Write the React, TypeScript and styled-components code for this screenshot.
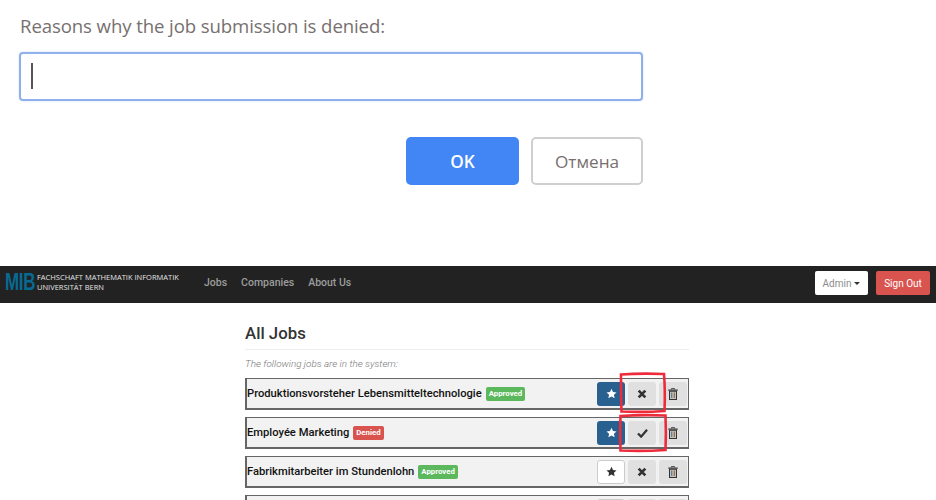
import React from "react";
import styled, { createGlobalStyle } from "styled-components";

const Global = createGlobalStyle`
  html, body {
    margin: 0;
    padding: 0;
    background: #ffffff;
    overflow: hidden;
  }
  * { box-sizing: border-box; }
`;

const Page = styled.div`
  position: relative;
  width: 936px;
  height: 500px;
  overflow: hidden;
  font-family: Roboto, "Liberation Sans", sans-serif;
`;

const Prompt = styled.div`
  height: 266px;
  padding: 15px 293px 0 19px;
  font-family: "Open Sans", "Noto Sans", sans-serif;
`;

const PromptTitle = styled.div`
  margin-left: 1px;
  font-size: 18.6px;
  line-height: 22px;
  color: #77706f;
  letter-spacing: -0.1px;
`;

const PromptInput = styled.div`
  margin-top: 15px;
  height: 49px;
  border: 2px solid #8fb0ea;
  border-radius: 4px;
  box-shadow: 0 0 2px #c5d6f4;
  padding: 9px 10px;
`;

const Caret = styled.div`
  width: 2px;
  height: 26px;
  background: #555555;
`;

const PromptActions = styled.div`
  margin-top: 36px;
  display: flex;
  justify-content: flex-end;
  gap: 12px;
`;

const PromptButton = styled.div<{ $primary?: boolean }>`
  height: 48px;
  width: ${(p) => (p.$primary ? "113px" : "112px")};
  display: flex;
  align-items: center;
  justify-content: center;
  border-radius: 5px;
  font-size: 17.2px;
  font-weight: ${(p) => (p.$primary ? 600 : 400)};
  background: ${(p) => (p.$primary ? "#4285f4" : "#ffffff")};
  color: ${(p) => (p.$primary ? "#ffffff" : "#77706f")};
  border: ${(p) => (p.$primary ? "none" : "2px solid #cfcfcf")};
`;

const Navbar = styled.div`
  height: 37px;
  background: #222222;
  display: flex;
  align-items: flex-start;
  padding: 5px 6px 0 5px;
`;

const Brand = styled.div`
  display: flex;
  align-items: center;
  width: 199px;
  height: 23px;
`;

const BrandMark = styled.div`
  font-family: "Liberation Sans", sans-serif;
  font-weight: 700;
  font-size: 17px;
  line-height: 20px;
  color: #076a92;
  transform: scaleY(1.45);
  transform-origin: center;
  width: 32px;
  letter-spacing: -0.3px;
`;

const BrandText = styled.div`
  font-family: "Open Sans", sans-serif;
  font-size: 7.5px;
  line-height: 9.5px;
  color: #e4e4e4;
  white-space: nowrap;
`;

const NavLinks = styled.div`
  height: 23px;
  display: flex;
  align-items: center;
  gap: 14px;
  font-size: 10.5px;
  font-weight: 500;
  color: #9d9d9d;
`;

const NavRight = styled.div`
  margin-left: auto;
  display: flex;
  gap: 8px;
`;

const NavButton = styled.div<{ $danger?: boolean }>`
  height: 24px;
  display: flex;
  align-items: center;
  justify-content: center;
  gap: 3px;
  border-radius: 2px;
  font-size: 10px;
  width: ${(p) => (p.$danger ? "54px" : "53px")};
  background: ${(p) => (p.$danger ? "#d9534f" : "#ffffff")};
  color: ${(p) => (p.$danger ? "#ffffff" : "#8d8d8d")};
`;

const CaretDown = styled.span`
  width: 0;
  height: 0;
  border-left: 3px solid transparent;
  border-right: 3px solid transparent;
  border-top: 3px solid #333333;
`;

const Content = styled.div`
  width: 444px;
  margin-left: 245px;
  padding-top: 21px;
`;

const Heading = styled.div`
  font-size: 16.8px;
  line-height: 19px;
  font-weight: 500;
  color: #333333;
  padding-bottom: 6px;
  border-bottom: 1px solid #eeeeee;
`;

const Lead = styled.div`
  margin-top: 7px;
  height: 13px;
  font-size: 9.9px;
  line-height: 13px;
  font-style: italic;
  font-weight: 300;
  color: #777777;
`;

const JobList = styled.div`
  margin-top: 8px;
  display: flex;
  flex-direction: column;
  gap: 7px;
`;

const JobRow = styled.div`
  height: 32px;
  background: #f2f2f2;
  border: 1px solid #666666;
  border-bottom-width: 2px;
  border-left-width: 2px;
  display: flex;
  align-items: center;
  padding: 0 1px 0 0;
`;

const JobTitle = styled.div`
  font-size: 11.2px;
  font-weight: 500;
  color: #111111;
  white-space: nowrap;
`;

const Badge = styled.span<{ $kind: "ok" | "no" }>`
  margin-left: 4px;
  height: 14px;
  padding: 0 3px;
  display: inline-flex;
  align-items: center;
  border-radius: 2px;
  font-size: 7.8px;
  font-weight: 700;
  color: #ffffff;
  background: ${(p) => (p.$kind === "ok" ? "#5cb85c" : "#d9534f")};
`;

const Actions = styled.div`
  margin-left: auto;
  display: flex;
  gap: 3px;
`;

const ActionButton = styled.div<{ $variant?: "star" | "plain" | "white" }>`
  height: 24px;
  width: 28px;
  display: flex;
  align-items: center;
  justify-content: center;
  border-radius: 3px;
  background: ${(p) =>
    p.$variant === "star" ? "#286090" : p.$variant === "white" ? "#ffffff" : "#e0e0e0"};
  border: ${(p) => (p.$variant === "white" ? "1px solid #cccccc" : "none")};
  color: ${(p) => (p.$variant === "star" ? "#ffffff" : "#333333")};
`;

const Marks = styled.svg`
  position: absolute;
  left: 0;
  top: 0;
  pointer-events: none;
`;

const Star = () => (
  <svg width="11" height="11" viewBox="0 0 24 24" fill="currentColor">
    <path d="M12 1.5l3.3 7.2 7.7.9-5.7 5.3 1.5 7.7L12 18.7l-6.8 3.9 1.5-7.7L1 9.6l7.7-.9z" />
  </svg>
);

const Cross = () => (
  <svg width="10" height="10" viewBox="0 0 24 24" fill="none" stroke="currentColor" strokeWidth="6.5">
    <path d="M4 4l16 16M20 4L4 20" />
  </svg>
);

const Check = () => (
  <svg width="11" height="10" viewBox="0 0 24 22" fill="none" stroke="currentColor" strokeWidth="5">
    <path d="M2 12l7 7L22 4" />
  </svg>
);

const Trash = () => (
  <svg width="10" height="12" viewBox="0 0 20 24">
    <path d="M7 3V1h6v2" fill="none" stroke="#333" strokeWidth="1.6" />
    <rect x="0.5" y="3" width="19" height="2.4" fill="#333" />
    <rect x="3" y="6.5" width="14" height="16.5" fill="#c7c2b5" stroke="#333" strokeWidth="2" />
    <path d="M7.5 9v11" stroke="#3a6ea5" strokeWidth="2" />
    <path d="M12.5 9v11" stroke="#8a5a3a" strokeWidth="2" />
  </svg>
);

type Job = { title: string; status?: "Approved" | "Denied"; starred: boolean; approved: boolean };

const jobs: Job[] = [
  { title: "Produktionsvorsteher Lebensmitteltechnologie", status: "Approved", starred: true, approved: true },
  { title: "Employée Marketing", status: "Denied", starred: true, approved: false },
  { title: "Fabrikmitarbeiter im Stundenlohn", status: "Approved", starred: false, approved: true },
  { title: "", starred: false, approved: true },
];

export default function App() {
  return (
    <Page>
      <Global />
      <Prompt>
        <PromptTitle>Reasons why the job submission is denied:</PromptTitle>
        <PromptInput>
          <Caret />
        </PromptInput>
        <PromptActions>
          <PromptButton $primary>OK</PromptButton>
          <PromptButton>Отмена</PromptButton>
        </PromptActions>
      </Prompt>
      <Navbar>
        <Brand>
          <BrandMark>MIB</BrandMark>
          <BrandText>
            FACHSCHAFT MATHEMATIK INFORMATIK
            <br />
            UNIVERSITÄT BERN
          </BrandText>
        </Brand>
        <NavLinks>
          <span>Jobs</span>
          <span>Companies</span>
          <span>About Us</span>
        </NavLinks>
        <NavRight>
          <NavButton>
            Admin <CaretDown />
          </NavButton>
          <NavButton $danger>Sign Out</NavButton>
        </NavRight>
      </Navbar>
      <Content>
        <Heading>All Jobs</Heading>
        <Lead>The following jobs are in the system:</Lead>
        <JobList>
          {jobs.map((job, i) => (
            <JobRow key={i}>
              <JobTitle>{job.title}</JobTitle>
              {job.status && <Badge $kind={job.status === "Approved" ? "ok" : "no"}>{job.status}</Badge>}
              <Actions>
                <ActionButton $variant={job.starred ? "star" : "white"}>
                  <Star />
                </ActionButton>
                <ActionButton>{job.approved ? <Cross /> : <Check />}</ActionButton>
                <ActionButton>
                  <Trash />
                </ActionButton>
              </Actions>
            </JobRow>
          ))}
        </JobList>
      </Content>
      <Marks width="936" height="500" fill="none" stroke="#ee2b3b" strokeWidth="2.6">
        <path d="M621 374.5c14-1 30-1 43-.5 1 12 1 25 .5 37-14 1-30 1-43 .5-.5-12-.5-25-.5-37z" />
        <path d="M620.5 416c15-1 31-1 45-.5 .5 12 .5 24 0 34.5-16 1-32 1-45 .5-.5-12-.5-24 0-34.5z" />
      </Marks>
    </Page>
  );
}
